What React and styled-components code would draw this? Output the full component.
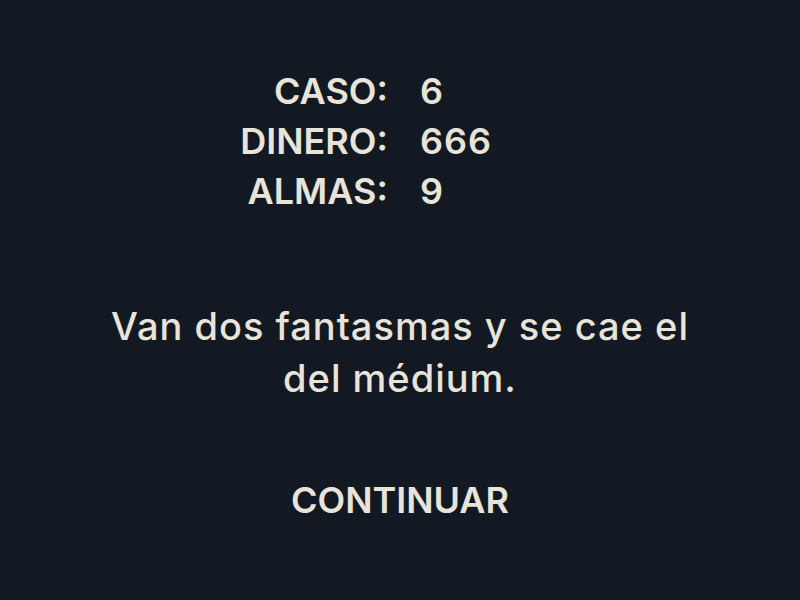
import { Fragment } from 'react';
import styled, { createGlobalStyle } from 'styled-components';

const GlobalStyle = createGlobalStyle`
  html, body {
    margin: 0;
    padding: 0;
    background: #121923;
  }
  body {
    font-family: Inter, "Noto Sans", sans-serif;
    color: #e8e4da;
  }
`;

const Screen = styled.div`
  width: 800px;
  height: 600px;
  display: flex;
  flex-direction: column;
  background: #121923;
`;

const Stats = styled.div`
  display: grid;
  grid-template-columns: 1fr 1fr;
  column-gap: 32px;
  padding: 66px 0 0 8px;
  font-size: 36px;
  font-weight: 600;
  line-height: 50px;
`;

const Label = styled.span`
  text-align: right;
`;

const Value = styled.span`
  text-align: left;
  letter-spacing: 1px;
`;

const Joke = styled.p`
  margin: 84px auto 0;
  width: 620px;
  text-align: center;
  font-size: 38px;
  font-weight: 500;
  line-height: 52px;
  letter-spacing: 1px;
`;

const Button = styled.button`
  margin: 74px auto 0;
  padding: 0;
  border: none;
  background: none;
  color: #e8e4da;
  font-family: inherit;
  font-size: 36px;
  font-weight: 600;
  line-height: 44px;
  cursor: pointer;
`;

const stats = [
  { label: 'CASO:', value: '6' },
  { label: 'DINERO:', value: '666' },
  { label: 'ALMAS:', value: '9' },
];

const App = () => {
  return (
    <Screen>
      <GlobalStyle />
      <Stats>
        {stats.map(({ label, value }) => (
          <Fragment key={label}>
            <Label>{label}</Label>
            <Value>{value}</Value>
          </Fragment>
        ))}
      </Stats>
      <Joke>Van dos fantasmas y se cae el del médium.</Joke>
      <Button>CONTINUAR</Button>
    </Screen>
  );
};

export default App;
